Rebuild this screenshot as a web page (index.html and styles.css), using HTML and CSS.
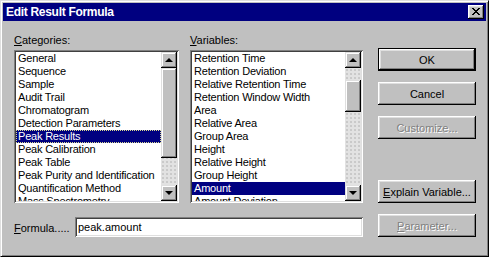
FILE: index.html
```html
<!DOCTYPE html>
<html lang="en">
<head>
  <meta charset="UTF-8">
  <title>Edit Result Formula</title>
  <link rel="stylesheet" href="styles.css">
</head>
<body>

  <div class="window">
    <div class="titlebar">
      <span class="title">Edit Result Formula</span>
      <button class="close-btn" type="button">
        <svg width="8" height="7" viewBox="0 0 8 7" shape-rendering="crispEdges">
          <path d="M0 0h2v1H0zM6 0h2v1H6zM1 1h2v1H1zM5 1h2v1H5zM2 2h4v1H2zM3 3h2v1H3zM2 4h4v1H2zM1 5h2v1H1zM5 5h2v1H5zM0 6h2v1H0zM6 6h2v1H6z" fill="#000"/>
        </svg>
      </button>
    </div>

    <div class="dialog-body">
      <div class="main-row">
        <!-- categories -->
        <div class="field field-cat">
          <div class="field-label"><u>C</u>ategories:</div>
          <div class="listbox">
            <ul class="items">
              <li>General</li>
              <li>Sequence</li>
              <li>Sample</li>
              <li>Audit Trail</li>
              <li>Chromatogram</li>
              <li>Detection Parameters</li>
              <li class="selected focused">Peak Results</li>
              <li>Peak Calibration</li>
              <li>Peak Table</li>
              <li>Peak Purity and Identification</li>
              <li>Quantification Method</li>
              <li>Mass Spectrometry</li>
            </ul>
            <div class="scrollbar">
              <div class="sb-btn"><span class="arrow arrow-up"></span></div>
              <div class="sb-track"><div class="sb-thumb thumb-cat"></div></div>
              <div class="sb-btn"><span class="arrow arrow-down"></span></div>
            </div>
          </div>
        </div>

        <!-- variables -->
        <div class="field field-var">
          <div class="field-label"><u>V</u>ariables:</div>
          <div class="listbox">
            <ul class="items">
              <li>Retention Time</li>
              <li>Retention Deviation</li>
              <li>Relative Retention Time</li>
              <li>Retention Window Width</li>
              <li>Area</li>
              <li>Relative Area</li>
              <li>Group Area</li>
              <li>Height</li>
              <li>Relative Height</li>
              <li>Group Height</li>
              <li class="selected">Amount</li>
              <li>Amount Deviation</li>
            </ul>
            <div class="scrollbar">
              <div class="sb-btn"><span class="arrow arrow-up"></span></div>
              <div class="sb-track"><div class="sb-thumb thumb-var"></div></div>
              <div class="sb-btn"><span class="arrow arrow-down"></span></div>
            </div>
          </div>
        </div>

        <div class="buttons">
          <button class="btn btn-default" type="button">OK</button>
          <button class="btn" type="button">Cancel</button>
          <button class="btn" type="button" disabled>Customize...</button>
          <button class="btn btn-explain" type="button"><u>E</u>xplain Variable...</button>
        </div>
      </div>

      <div class="formula-row">
        <label class="formula-label" for="formula"><u>F</u>ormula.....</label>
        <input class="formula-input" id="formula" type="text" value="peak.amount">
        <button class="btn btn-param" type="button" disabled><u>P</u>arameter...</button>
      </div>
    </div>
  </div>

</body>
</html>
```

FILE: styles.css
```css
body {
  margin: 0;
  padding: 0;
  font-family: "Liberation Sans", Arial, sans-serif;
  font-size: 11px;
  color: #000;
  background-color: #c0c0c0;
}

.window {
  box-sizing: border-box;
  width: 489px;
  height: 257px;
  padding: 2px;
  background-color: #c0c0c0;
  border: 1px solid;
  border-color: #dfdfdf #000 #000 #dfdfdf;
  box-shadow: inset 1px 1px #fff, inset -1px -1px #808080;
}

.titlebar {
  height: 18px;
  background-color: #000080;
  display: flex;
  align-items: center;
  justify-content: space-between;
  padding: 0 2px 0 3px;
}

.title {
  color: #fff;
  font-weight: bold;
  font-size: 12px;
  letter-spacing: -0.3px;
}

.close-btn {
  width: 16px;
  height: 14px;
  padding: 0 0 1px 0;
  border: none;
  background-color: #c0c0c0;
  box-shadow: inset -1px -1px #000, inset 1px 1px #fff, inset -2px -2px #808080, inset 2px 2px #dfdfdf;
  display: flex;
  align-items: center;
  justify-content: center;
}

.close-btn svg {
  display: block;
}

.dialog-body {
  padding: 13px 0 0 11px;
}

.main-row {
  display: flex;
}

.field-cat {
  width: 165px;
}

.field-var {
  width: 173px;
  margin-left: 11px;
}

.field-label {
  height: 13px;
  line-height: 13px;
  margin-bottom: 3px;
}

.listbox {
  box-sizing: border-box;
  height: 153px;
  padding: 2px;
  background-color: #fff;
  display: flex;
  box-shadow: inset 1px 1px #808080, inset -1px -1px #fff, inset 2px 2px #404040, inset -2px -2px #dfdfdf;
}

.items {
  list-style: none;
  margin: 0;
  padding: 0;
  flex: 1;
  overflow: hidden;
}

.items li {
  height: 13px;
  line-height: 13px;
  padding-left: 2px;
  white-space: nowrap;
  letter-spacing: -0.2px;
}

.items li.selected {
  background-color: #000080;
  color: #fff;
}

.items li.focused {
  outline: 1px dotted #d8d890;
  outline-offset: -1px;
}

.scrollbar {
  width: 16px;
  display: flex;
  flex-direction: column;
}

.sb-btn {
  height: 16px;
  flex: none;
  background-color: #c0c0c0;
  box-shadow: inset -1px -1px #000, inset 1px 1px #dfdfdf, inset -2px -2px #808080, inset 2px 2px #fff;
  display: flex;
  align-items: center;
  justify-content: center;
}

.arrow {
  width: 0;
  height: 0;
  border-left: 4px solid transparent;
  border-right: 4px solid transparent;
}

.arrow-up {
  border-bottom: 4px solid #000;
  margin-bottom: 1px;
}

.arrow-down {
  border-top: 4px solid #000;
}

.sb-track {
  flex: 1;
  background-color: #e2e2e2;
  background-image: radial-gradient(#b0b0b0 0.5px, transparent 0.9px);
  background-size: 4px 4px;
}

.sb-thumb {
  background-color: #c0c0c0;
  box-shadow: inset -1px -1px #000, inset 1px 1px #dfdfdf, inset -2px -2px #808080, inset 2px 2px #fff;
}

.thumb-cat {
  height: 90px;
}

.thumb-var {
  height: 32px;
  margin-top: 12px;
}

.buttons {
  width: 98px;
  margin-left: 15px;
  padding-top: 14px;
  display: flex;
  flex-direction: column;
  gap: 11px;
}

.btn {
  box-sizing: border-box;
  width: 98px;
  height: 23px;
  padding: 0;
  border: none;
  font-family: inherit;
  font-size: 11px;
  color: #000;
  background-color: #c0c0c0;
  box-shadow: inset -1px -1px #000, inset 1px 1px #fff, inset -2px -2px #808080, inset 2px 2px #dfdfdf;
}

.btn-default {
  border: 1px solid #000;
}

.btn:disabled {
  color: #808080;
  text-shadow: 1px 1px #fff;
}

.btn-explain {
  margin-top: auto;
}

.formula-row {
  display: flex;
  align-items: flex-start;
  margin-top: 11px;
}

.formula-label {
  width: 61px;
  height: 13px;
  line-height: 13px;
  margin-top: 8px;
}

.formula-input {
  box-sizing: border-box;
  width: 288px;
  height: 20px;
  margin-top: 3px;
  padding: 0 0 0 3px;
  border: none;
  font-family: inherit;
  font-size: 11px;
  color: #000;
  background-color: #fff;
  box-shadow: inset 1px 1px #808080, inset -1px -1px #fff, inset 2px 2px #404040, inset -2px -2px #dfdfdf;
}

.btn-param {
  margin-left: 15px;
}
```
